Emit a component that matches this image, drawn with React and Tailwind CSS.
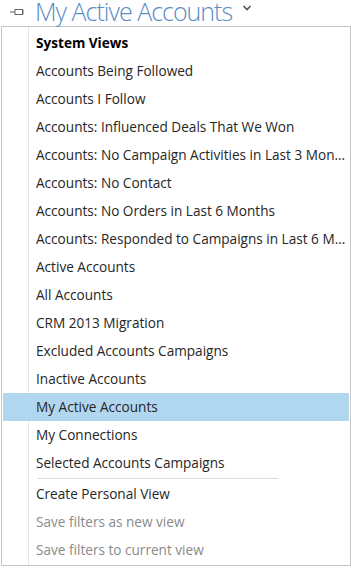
import { Fragment } from 'react';

const systemViews = [
  'Accounts Being Followed',
  'Accounts I Follow',
  'Accounts: Influenced Deals That We Won',
  'Accounts: No Campaign Activities in Last 3 Months',
  'Accounts: No Contact',
  'Accounts: No Orders in Last 6 Months',
  'Accounts: Responded to Campaigns in Last 6 Months',
  'Active Accounts',
  'All Accounts',
  'CRM 2013 Migration',
  'Excluded Accounts Campaigns',
  'Inactive Accounts',
  'My Active Accounts',
  'My Connections',
  'Selected Accounts Campaigns',
];

const actions = [
  { label: 'Create Personal View', disabled: false },
  { label: 'Save filters as new view', disabled: true },
  { label: 'Save filters to current view', disabled: true },
];

function PinIcon() {
  return (
    <svg width="16" height="10" viewBox="0 0 16 10" className="text-[#666]">
      <path d="M1 5h5M6 2v6M6 2.5h8v5H6M13.5 2.5v5" fill="none" stroke="currentColor" strokeWidth="1" />
    </svg>
  );
}

function Row({ children, selected, className = '' }) {
  return (
    <div className={`flex h-[28px] items-center ${selected ? 'bg-[#b1d6f0]' : ''}`}>
      <span className={`min-w-0 truncate pl-[33px] pr-[3px] ${className}`}>{children}</span>
    </div>
  );
}

export default function App() {
  return (
    <div className="h-[568px] w-[351px] bg-white font-['Open_Sans',sans-serif] text-[#262626]">
      <div className="flex h-[26px] items-center">
        <span className="ml-[9px] mt-[-2px] w-[26px]">
          <PinIcon />
        </span>
        <span className="mt-[-4px] text-[25px] font-light leading-none tracking-[-1px] text-[#5c8cc4]">
          My Active Accounts
        </span>
        <svg width="10" height="8" viewBox="0 0 10 8" className="ml-[10px] mt-[-10px] text-[#555]">
          <path d="M1.5 2l3.5 3.5L8.5 2" fill="none" stroke="currentColor" strokeWidth="1.6" />
        </svg>
      </div>
      <div className="ml-px w-[350px] border border-[#c6c6c6] bg-[linear-gradient(to_right,transparent_26px,#e4e4e4_26px,#e4e4e4_27px,transparent_27px)] px-px pb-px pt-[2px] text-[13.6px]">
        <Row className="font-bold text-black">System Views</Row>
        {systemViews.map((v) => (
          <Row key={v} selected={v === 'My Active Accounts'}>
            {v}
          </Row>
        ))}
        <div className="flex h-[3px] items-center pl-[34px]">
          <div className="h-px w-[241px] bg-[#dcdcdc]" />
        </div>
        {actions.map((a) => (
          <Fragment key={a.label}>
            <Row className={a.disabled ? 'text-[#8a8a8a]' : ''}>{a.label}</Row>
          </Fragment>
        ))}
      </div>
    </div>
  );
}
